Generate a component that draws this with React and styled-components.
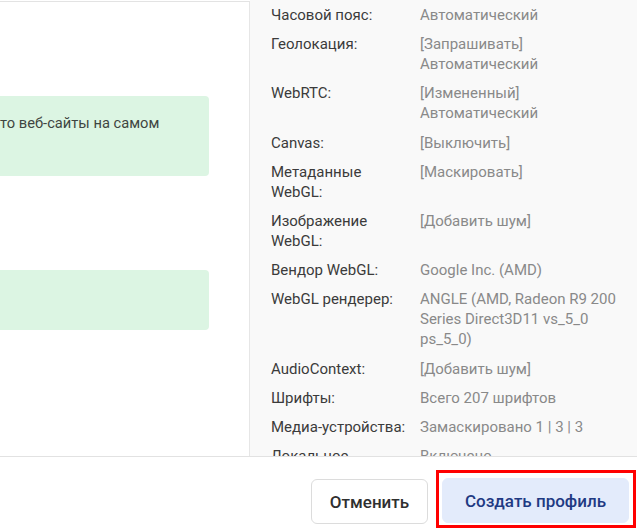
import React from "react";
import styled, { createGlobalStyle } from "styled-components";

const Global = createGlobalStyle`
  html, body { margin: 0; padding: 0; background: #ffffff; }
  body { font-family: Roboto, "Noto Sans", "Liberation Sans", sans-serif; }
  * { box-sizing: border-box; }
`;

const Page = styled.div`
  width: 637px;
  height: 532px;
  display: flex;
  flex-direction: column;
  overflow: hidden;
  background: #ffffff;
`;

const Main = styled.div`
  flex: 1;
  display: flex;
  min-height: 0;
  overflow: hidden;
`;

const LeftPanel = styled.div`
  width: 250px;
  flex: none;
  margin-top: 1px;
  border-top: 1px solid #e3e3e3;
  border-right: 1px solid #e6e6e6;
  padding: 94px 40px 0 0;
  display: flex;
  flex-direction: column;
  gap: 94px;
  overflow: hidden;
`;

const Notice = styled.div`
  height: ${(p) => p.$h}px;
  background: #dcf5e3;
  border-radius: 0 4px 4px 0;
  padding: 17px 16px 0 0;
  font-size: 14.7px;
  line-height: 20px;
  color: #3f4541;
  white-space: nowrap;
  overflow: hidden;
`;

const RightPanel = styled.div`
  flex: 1;
  background: #f9f9f9;
  padding: 5px 16px 0 21px;
  overflow: hidden;
`;

const Grid = styled.div`
  display: grid;
  grid-template-columns: 149px 1fr;
  row-gap: 9.2px;
  font-size: 15px;
  line-height: 20px;
`;

const Label = styled.div`
  color: #3b3b3b;
  white-space: nowrap;
`;

const Value = styled.div`
  color: #898989;
  white-space: nowrap;
`;

const Line = styled.span`
  display: block;
`;

const Footer = styled.div`
  height: 76px;
  flex: none;
  border-top: 1px solid #e2e2e2;
  display: flex;
  justify-content: flex-end;
  align-items: flex-start;
  gap: 8px;
  padding: 13px 1px 0 0;
`;

const Button = styled.button`
  width: ${(p) => (p.$primary ? 187 : 117)}px;
  height: 45px;
  border-radius: 6px;
  font-family: Roboto, "Noto Sans", "Liberation Sans", sans-serif;
  font-size: 17px;
  font-weight: 500;
  cursor: pointer;
  border: 1px solid ${(p) => (p.$primary ? "#e3ebfb" : "#dcdcdc")};
  background: ${(p) => (p.$primary ? "#e3ebfb" : "#ffffff")};
  color: ${(p) => (p.$primary ? "#1f3a83" : "#2f2f2f")};
  padding: 0;
  margin-top: ${(p) => (p.$primary ? 0 : 9)}px;
  white-space: nowrap;
`;

const Highlight = styled.div`
  border: 3px solid #ff0000;
  padding: 5px 4px 2px 3px;
  display: flex;
`;

const rows = [
  [["Часовой пояс:"], ["Автоматический"]],
  [["Геолокация:"], ["[Запрашивать]", "Автоматический"]],
  [["WebRTC:"], ["[Измененный]", "Автоматический"]],
  [["Canvas:"], ["[Выключить]"]],
  [["Метаданные", "WebGL:"], ["[Маскировать]"]],
  [["Изображение", "WebGL:"], ["[Добавить шум]"]],
  [["Вендор WebGL:"], ["Google Inc. (AMD)"]],
  [["WebGL рендерер:"], ["ANGLE (AMD, Radeon R9 200", "Series Direct3D11 vs_5_0", "ps_5_0)"]],
  [["AudioContext:"], ["[Добавить шум]"]],
  [["Шрифты:"], ["Всего 207 шрифтов"]],
  [["Медиа-устройства:"], ["Замаскировано 1 | 3 | 3"]],
  [["Локальное", "хранилище:"], ["Включено"]],
];

export default function App() {
  return (
    <Page>
      <Global />
      <Main>
        <LeftPanel>
          <Notice $h={80}>то веб-сайты на самом</Notice>
          <Notice $h={60} />
        </LeftPanel>
        <RightPanel>
          <Grid>
            {rows.map(([label, value], i) => (
              <React.Fragment key={i}>
                <Label>
                  {label.map((l, j) => (
                    <Line key={j}>{l}</Line>
                  ))}
                </Label>
                <Value>
                  {value.map((v, j) => (
                    <Line key={j}>{v}</Line>
                  ))}
                </Value>
              </React.Fragment>
            ))}
          </Grid>
        </RightPanel>
      </Main>
      <Footer>
        <Button>Отменить</Button>
        <Highlight>
          <Button $primary>Создать профиль</Button>
        </Highlight>
      </Footer>
    </Page>
  );
}
